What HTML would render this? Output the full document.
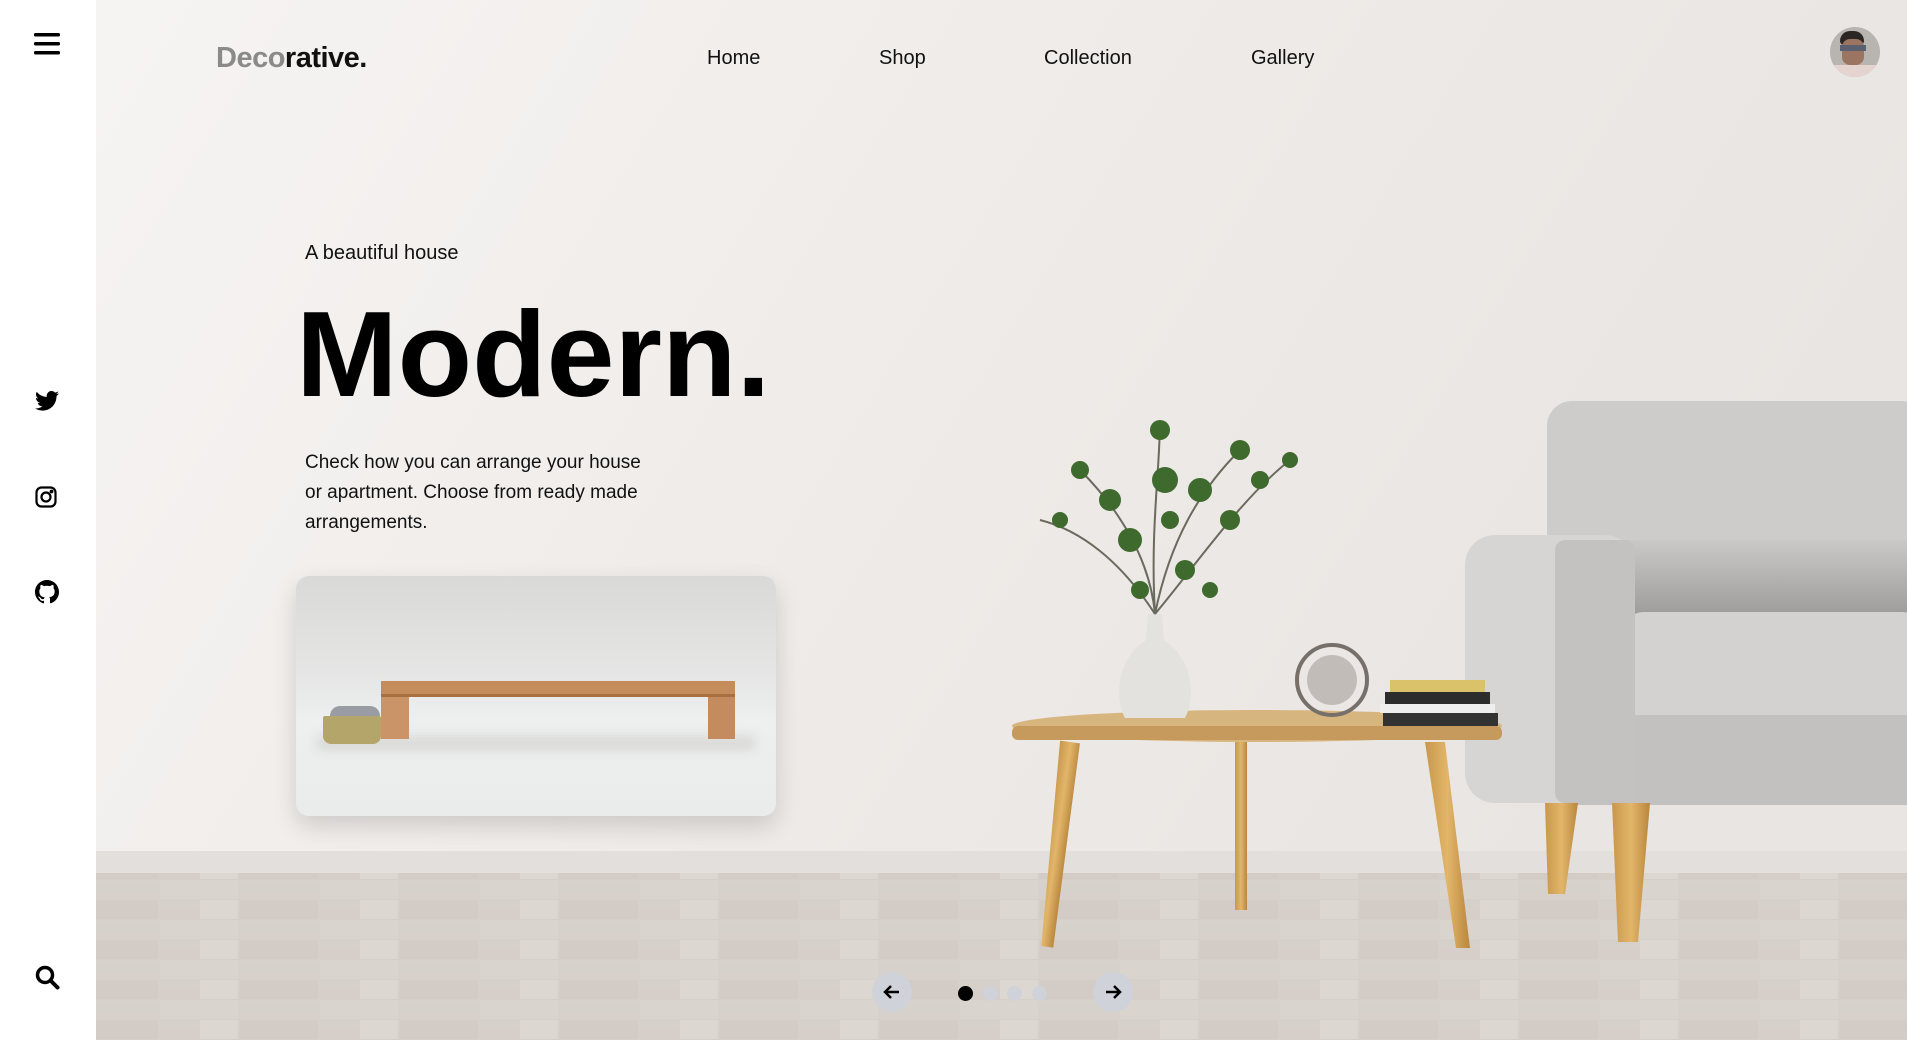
<!DOCTYPE html>
<html><head><meta charset="utf-8"><style>
*{margin:0;padding:0;box-sizing:border-box}
body{width:1907px;height:1040px;overflow:hidden;font-family:"Liberation Sans",sans-serif;position:relative;background:#eeebe9}
.side{position:absolute;left:0;top:0;width:96px;height:1040px;background:#fff;z-index:5}
.bg{position:absolute;left:96px;top:0;width:1811px;height:1040px}
.t{position:absolute;color:#111;white-space:nowrap}
.nav{font-size:20px;top:47px}
.card{position:absolute;left:296px;top:576px;width:480px;height:240px;border-radius:13px;overflow:hidden;box-shadow:0 10px 24px rgba(0,0,0,.15);background:linear-gradient(#d9d9d7,#e6e7e6 45%,#eef0f0 60%,#e9eceb)}
.btn{position:absolute;width:40px;height:40px;border-radius:50%;background:#cfd2d8;top:972px}
.dot{position:absolute;width:15px;height:15px;border-radius:50%;background:#cfd2d8;top:986px}
</style></head><body>
<svg class="bg" width="1811" height="1040" viewBox="96 0 1811 1040">
<defs>
<linearGradient id="w" x1="0" x2="1" y1="0" y2="0.3"><stop offset="0" stop-color="#f6f4f3"/><stop offset="0.6" stop-color="#eeeae7"/><stop offset="1" stop-color="#e9e5e2"/></linearGradient>
<linearGradient id="f" x1="0" x2="0" y1="0" y2="1"><stop offset="0" stop-color="#d9d3cd"/><stop offset="1" stop-color="#d4ccc6"/></linearGradient>
<linearGradient id="wood" x1="0" x2="1"><stop offset="0" stop-color="#c8974c"/><stop offset="0.5" stop-color="#e2b66a"/><stop offset="1" stop-color="#b9863e"/></linearGradient>
<linearGradient id="sh" x1="0" x2="0" y1="0" y2="1"><stop offset="0" stop-color="#c9c8c6"/><stop offset="1" stop-color="#8f8d8b"/></linearGradient>
<pattern id="fp" width="160" height="40" patternUnits="userSpaceOnUse"><rect width="160" height="40" fill="url(#f)"/><rect x="0" y="0" width="78" height="19" fill="#ddd7d1"/><rect x="80" y="20" width="78" height="19" fill="#cfc7c0"/><rect x="40" y="20" width="38" height="19" fill="#e2dcd6"/></pattern>
</defs>
<rect x="96" y="0" width="1811" height="873" fill="url(#w)"/>
<rect x="96" y="851" width="1811" height="22" fill="#e3dfdc"/>
<rect x="96" y="873" width="1811" height="167" fill="url(#fp)"/>
<rect x="96" y="873" width="1811" height="167" fill="#d8d1cb" opacity=".45"/>
<!-- sofa -->
<rect x="1547" y="401" width="380" height="320" rx="25" fill="#cdccca"/>
<rect x="1590" y="540" width="330" height="80" fill="url(#sh)" opacity=".8"/>
<rect x="1625" y="612" width="295" height="105" rx="18" fill="#d3d2d0"/>
<rect x="1560" y="715" width="360" height="90" rx="10" fill="#c2c1bf"/>
<rect x="1465" y="535" width="170" height="268" rx="30" fill="#d6d5d3"/>
<rect x="1555" y="540" width="80" height="263" rx="10" fill="#c3c2c0"/>
<polygon points="1545,803 1578,803 1565,894 1548,894" fill="url(#wood)"/>
<polygon points="1612,803 1650,803 1638,942 1618,942" fill="url(#wood)"/>
<!-- table -->
<polygon points="1060,742 1080,742 1082,948 1070,948" fill="url(#wood)" transform="rotate(8 1070 742)"/>
<rect x="1235" y="742" width="12" height="168" fill="url(#wood)"/>
<polygon points="1425,742 1445,742 1470,948 1456,948" fill="url(#wood)"/>
<ellipse cx="1257" cy="726" rx="245" ry="16" fill="#d7b57e"/>
<rect x="1012" y="726" width="490" height="14" rx="6" fill="#c59a5c"/>
<!-- vase -->
<path d="M1148,614 L1162,614 L1164,640 C1195,660 1195,700 1185,718 L1125,718 C1115,700 1115,660 1146,640 Z" fill="#e4e2df"/>
<g stroke="#6b6a5e" stroke-width="2" fill="none">
<path d="M1155,614 C1150,560 1120,510 1080,470"/><path d="M1155,614 C1170,540 1200,490 1240,450"/><path d="M1155,614 C1150,530 1160,470 1160,420"/><path d="M1155,614 C1200,560 1240,500 1290,460"/><path d="M1155,614 C1120,560 1080,530 1040,520"/>
</g>
<g fill="#3f6a2e">
<circle cx="1080" cy="470" r="9"/><circle cx="1110" cy="500" r="11"/><circle cx="1130" cy="540" r="12"/><circle cx="1160" cy="430" r="10"/><circle cx="1165" cy="480" r="13"/><circle cx="1200" cy="490" r="12"/><circle cx="1240" cy="450" r="10"/><circle cx="1230" cy="520" r="10"/><circle cx="1260" cy="480" r="9"/><circle cx="1290" cy="460" r="8"/><circle cx="1140" cy="590" r="9"/><circle cx="1185" cy="570" r="10"/><circle cx="1210" cy="590" r="8"/><circle cx="1060" cy="520" r="8"/><circle cx="1170" cy="520" r="9"/>
</g>
<!-- ball -->
<circle cx="1332" cy="680" r="35" fill="none" stroke="#77706a" stroke-width="4"/>
<circle cx="1332" cy="680" r="25" fill="#9a928b" opacity=".5"/>
<!-- books -->
<rect x="1390" y="680" width="95" height="12" fill="#d9c26a"/>
<rect x="1385" y="692" width="105" height="12" fill="#2c2c2c"/>
<rect x="1380" y="704" width="115" height="9" fill="#eeeeee"/>
<rect x="1383" y="713" width="115" height="13" fill="#333"/>
</svg>

<div class="side">
<svg style="position:absolute;left:34px;top:33px" width="26" height="22"><rect y="0" width="26" height="3.5" rx="1.5"/><rect y="9" width="26" height="3.5" rx="1.5"/><rect y="18" width="26" height="3.5" rx="1.5"/></svg>
<svg style="position:absolute;left:35px;top:391px" width="24" height="20" viewBox="0 0 24 20"><path d="M24 2.4a10 10 0 0 1-2.8.8A5 5 0 0 0 23.3.4a10 10 0 0 1-3.1 1.2A4.9 4.9 0 0 0 11.8 6 14 14 0 0 1 1.7.9a4.9 4.9 0 0 0 1.5 6.6A4.9 4.9 0 0 1 1 6.9a4.9 4.9 0 0 0 3.9 4.9 4.9 4.9 0 0 1-2.2.1 4.9 4.9 0 0 0 4.6 3.4A9.9 9.9 0 0 1 0 17.4 14 14 0 0 0 7.5 19.6c9 0 14-7.5 14-14v-.6A10 10 0 0 0 24 2.4z"/></svg>
<svg style="position:absolute;left:35px;top:486px" width="22" height="22" viewBox="0 0 22 22" fill="none" stroke="#000" stroke-width="2.2"><rect x="1.5" y="1.5" width="19" height="19" rx="5"/><circle cx="11" cy="11" r="4.5"/><circle cx="16.5" cy="5.5" r=".8" fill="#000"/></svg>
<svg style="position:absolute;left:35px;top:580px" width="24" height="24" viewBox="0 0 16 16"><path d="M8 0C3.6 0 0 3.6 0 8c0 3.5 2.3 6.5 5.5 7.6.4.1.5-.2.5-.4v-1.4c-2.2.5-2.7-1-2.7-1-.4-.9-.9-1.200-.9-1.2-.7-.5.1-.5.1-.5.8.1 1.2.8 1.2.8.7 1.2 1.9.9 2.3.7.1-.5.3-.9.5-1.1-1.8-.2-3.6-.9-3.6-4 0-.9.3-1.6.8-2.1-.1-.2-.4-1 .1-2.1 0 0 .7-.2 2.2.8a7.6 7.6 0 0 1 4 0c1.5-1 2.2-.8 2.2-.8.4 1.1.2 1.9.1 2.1.5.6.8 1.3.8 2.1 0 3.1-1.9 3.7-3.6 3.900.3.3.5.8.5 1.5v2.2c0 .2.1.5.6.4A8 8 0 0 0 16 8c0-4.4-3.6-8-8-8z"/></svg>
<svg style="position:absolute;left:35px;top:965px" width="25" height="25" viewBox="0 0 25 25"><circle cx="10" cy="10" r="7.5" fill="none" stroke="#000" stroke-width="3.5"/><path d="M15.5 15.5 L22.5 22.5" stroke="#000" stroke-width="4" stroke-linecap="round"/></svg>
</div>

<div class="t" style="left:216px;top:42px;font-size:29px;font-weight:bold;letter-spacing:-0.5px"><span style="color:#8a8a8a">Deco</span>rative.</div>
<div class="t nav" style="left:707px">Home</div>
<div class="t nav" style="left:879px">Shop</div>
<div class="t nav" style="left:1044px">Collection</div>
<div class="t nav" style="left:1251px">Gallery</div>
<div style="position:absolute;left:1830px;top:27px;width:50px;height:50px;border-radius:50%;overflow:hidden;background:#b8b4b0">
<div style="position:absolute;left:10px;top:4px;width:24px;height:14px;background:#2a2624;border-radius:10px 10px 4px 4px"></div>
<div style="position:absolute;left:12px;top:12px;width:22px;height:26px;background:#9c7562;border-radius:8px"></div>
<div style="position:absolute;left:10px;top:18px;width:26px;height:6px;background:#5b6070"></div>
<div style="position:absolute;left:2px;top:38px;width:46px;height:14px;background:#e5d3cf"></div>
</div>

<div class="t" style="left:305px;top:242px;font-size:20px">A beautiful house</div>
<div class="t" style="left:296px;top:284px;font-size:122px;font-weight:bold;letter-spacing:0px;color:#000">Modern.</div>
<div class="t" style="left:305px;top:448px;font-size:19px;line-height:30px;white-space:normal;width:345px">Check how you can arrange your house or apartment. Choose from ready made arrangements.</div>

<div class="card">
<div style="position:absolute;left:20px;top:160px;width:440px;height:14px;background:#c9c8c4;filter:blur(6px);opacity:.6"></div>
<div style="position:absolute;left:85px;top:105px;width:354px;height:16px;background:#c48c5a;border-bottom:3px solid #a8703f"></div>
<div style="position:absolute;left:85px;top:121px;width:28px;height:42px;background:#cb9468"></div>
<div style="position:absolute;left:412px;top:121px;width:27px;height:42px;background:#c48b5f"></div>
<div style="position:absolute;left:34px;top:130px;width:50px;height:14px;background:#9a9ca4;border-radius:10px 10px 0 0"></div>
<div style="position:absolute;left:27px;top:140px;width:58px;height:28px;background:#b4a66a;border-radius:2px 2px 8px 8px"></div>
</div>

<div class="btn" style="left:872px"><svg width="40" height="40"><path d="M27 20H13M19 14l-6 6 6 6" stroke="#000" stroke-width="2.5" fill="none"/></svg></div>
<div class="dot" style="left:958px;background:#000"></div>
<div class="dot" style="left:983px"></div>
<div class="dot" style="left:1007px"></div>
<div class="dot" style="left:1032px"></div>
<div class="btn" style="left:1093px"><svg width="40" height="40"><path d="M13 20H27M21 14l6 6-6 6" stroke="#000" stroke-width="2.5" fill="none"/></svg></div>
</body></html>
